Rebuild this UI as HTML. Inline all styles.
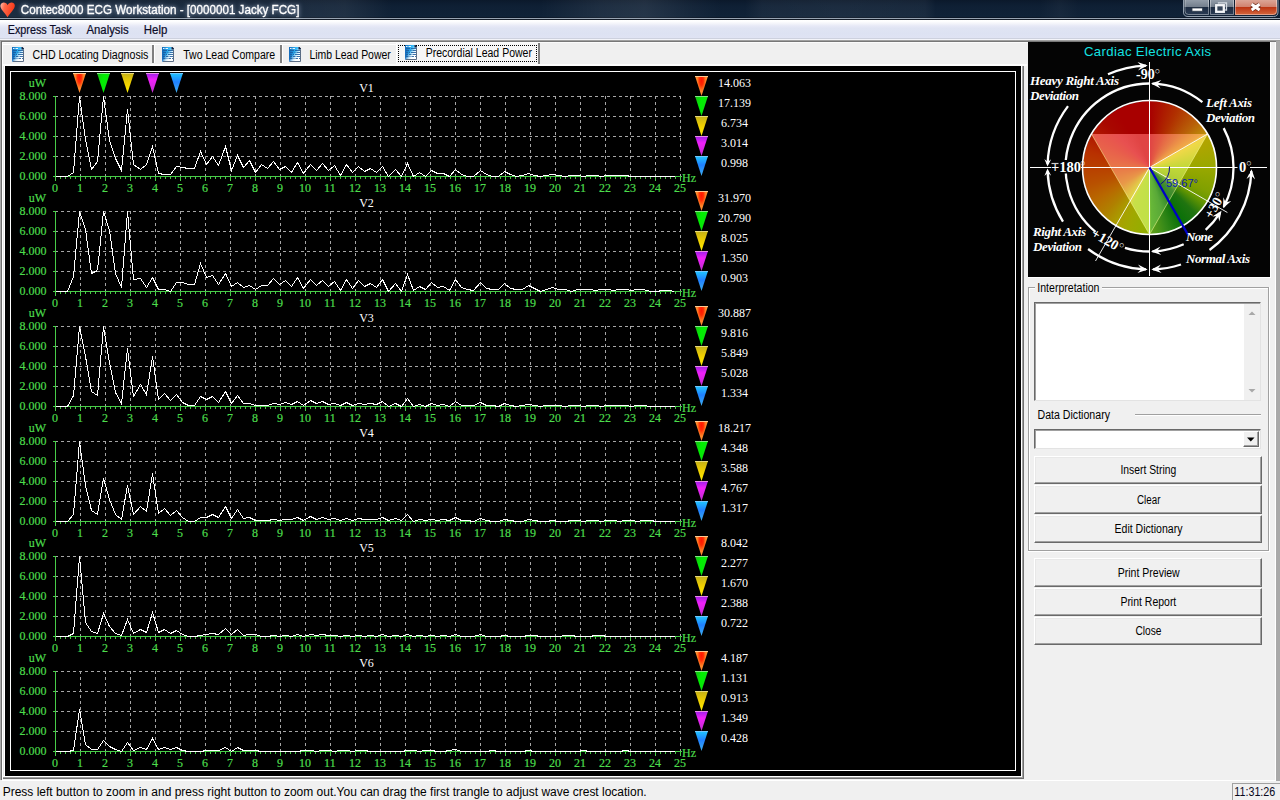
<!DOCTYPE html>
<html><head><meta charset="utf-8"><title>Contec8000 ECG Workstation</title>
<style>
*{box-sizing:border-box;margin:0;padding:0}
html,body{width:1280px;height:800px;overflow:hidden;background:#f0f0f0;font-family:"Liberation Sans",sans-serif;font-size:12px;color:#000}
.abs{position:absolute}
#title{left:0;top:0;width:1280px;height:18px;background:linear-gradient(to right,rgba(255,255,255,0.05) 0px,rgba(255,255,255,0.06) 300px,rgba(255,255,255,0.07) 345px,rgba(255,255,255,0) 392px,rgba(255,255,255,0) 540px,rgba(255,255,255,0.065) 600px,rgba(255,255,255,0.09) 645px,rgba(255,255,255,0.03) 690px,rgba(255,255,255,0) 722px,rgba(255,255,255,0) 745px,rgba(255,255,255,0.045) 762px,rgba(255,255,255,0.055) 840px,rgba(255,255,255,0.045) 925px,rgba(255,255,255,0) 936px,rgba(255,255,255,0) 1040px,rgba(255,255,255,0.03) 1060px,rgba(255,255,255,0) 1082px,rgba(255,255,255,0) 1280px),linear-gradient(#0b192b 0,#0d1d31 20%,#0f2035 38%,#102237 94%,#0c1828 95%)}
#menubar{left:0;top:20px;width:1280px;height:18px;background:linear-gradient(#ffffff 0,#fdfdfe 8%,#f3f4fa 20%,#e7e9f6 33%,#e0e4f3 45%,#dde2f2 75%,#dfe3f3 100%)}
.btn{position:absolute;left:1034px;width:228px;background:#f0f0f0;border-top:1px solid #fff;border-left:1px solid #fff;border-right:1px solid #696969;border-bottom:1px solid #696969;box-shadow:inset -1px -1px 0 #a0a0a0, inset 1px 1px 0 #e8e8e8}
.sep{position:absolute;top:45px;width:3px;height:18px;border-left:2px solid #808080;border-right:1px solid #fff}
#status{left:0;top:781px;width:1280px;height:19px;background:#f0f0f0}
#ui text{white-space:pre}
</style></head><body>
<div id="title" class="abs">
<svg class="abs" style="left:0;top:1px" width="16" height="17" viewBox="0 0 16 17"><defs><linearGradient id="hg" x1="0" y1="0" x2="1" y2="0.3"><stop offset="0" stop-color="#ffc0b0"/><stop offset="0.35" stop-color="#ff6848"/><stop offset="1" stop-color="#f83818"/></linearGradient></defs><path d="M7.6 4.2C6.4 0.8 1 0.6 0.4 4.6C0 8 4.5 11.5 7.6 16.2C10.2 11.5 15 8 14.8 4.4C14.4 0.6 9 0.8 7.6 4.2Z" fill="url(#hg)"/></svg>
<svg class="abs" style="left:1182px;top:0" width="98" height="18" viewBox="0 0 98 18">
<defs><linearGradient id="cb" x1="0" y1="0" x2="0" y2="1"><stop offset="0" stop-color="#929ca8"/><stop offset="0.48" stop-color="#717d8b"/><stop offset="0.5" stop-color="#1d2c42"/><stop offset="1" stop-color="#2a3c54"/></linearGradient>
<linearGradient id="cr" x1="0" y1="0" x2="0" y2="1"><stop offset="0" stop-color="#dba596"/><stop offset="0.48" stop-color="#d0806c"/><stop offset="0.5" stop-color="#bd3614"/><stop offset="1" stop-color="#d4683f"/></linearGradient></defs>
<path d="M1.500 -1V12Q1.500 16.500 6 16.500H91.500Q96 16.500 96 12V-1" fill="none" stroke="#a9b5c3" stroke-opacity=".85" stroke-width="1"/>
<path d="M2.500 0H27V15H6.500Q2.500 15 2.500 11Z" fill="url(#cb)"/>
<rect x="28" y="0" width="24" height="15" fill="url(#cb)"/>
<path d="M53 0H95V11Q95 15 91 15H53Z" fill="url(#cr)"/>
<path d="M3 -1V11Q3 14.500 6.500 14.500H26.500V-1M28.500 -1V14.500H51.500V-1M53.500 -1V14.500H91Q94.500 14.500 94.500 11V-1" fill="none" stroke="#fff" stroke-opacity=".38" stroke-width="1"/>
<rect x="10" y="8" width="10.500" height="3.200" fill="#fff" stroke="#303c4c" stroke-width=".8"/>
<path d="M36.500 5V3H44.500V10H43" fill="none" stroke="#d4dae2" stroke-width="1.300"/>
<rect x="34.200" y="5.200" width="7.600" height="6.600" fill="#34445a" stroke="#3a4656" stroke-width="2.800"/>
<rect x="34.200" y="5.200" width="7.600" height="6.600" fill="none" stroke="#f2f4f7" stroke-width="2.300"/>
<path d="M69.600 4.300L77.600 9.900M77.600 4.300L69.600 9.900" stroke="#5a2010" stroke-opacity=".8" stroke-width="4.600"/>
<path d="M69.600 4.300L77.600 9.900M77.600 4.300L69.600 9.900" stroke="#fff" stroke-width="3"/>
</svg>
</div>
<div class="abs" style="left:0;top:18px;width:1280px;height:1px;background:#98a4b2"></div>
<div class="abs" style="left:0;top:19px;width:1280px;height:1px;background:#141c28"></div>
<div id="menubar" class="abs"></div>
<div class="abs" style="left:0;top:38px;width:1280px;height:1px;background:#cdd1de"></div>
<div class="abs" style="left:0;top:39px;width:1280px;height:1px;background:#f3f4f9"></div>
<div class="abs" style="left:0;top:40px;width:1280px;height:1px;background:#a0a0a0"></div><div class="abs" style="left:0;top:41px;width:1280px;height:1px;background:#787878"></div>
<div class="abs" style="left:0;top:41px;width:1px;height:739px;background:#a9a9a9"></div><div class="abs" style="left:1px;top:41px;width:1px;height:739px;background:#6e6e6e"></div>
<div class="abs" style="left:2px;top:42px;width:1px;height:738px;background:#fff"></div>
<div class="abs" style="left:2px;top:42px;width:1026px;height:1px;background:#fbfbfb"></div>
<div class="abs" style="left:3px;top:44px;width:393px;height:1px;background:#fff"></div>
<div class="abs" style="left:1276px;top:41px;width:4px;height:740px;background:#a9a9a9"></div>
<div class="abs" style="left:1275px;top:42px;width:1px;height:738px;background:#fff"></div>
<div class="abs" style="left:1270px;top:42px;width:1px;height:236px;background:#fff"></div>
<div class="abs" style="left:1028px;top:277px;width:243px;height:1px;background:#fff"></div>
<div class="abs" style="left:2px;top:780px;width:1274px;height:1px;background:#fff"></div>
<div class="sep" style="left:152px"></div><div class="sep" style="left:280px"></div>
<div class="abs" style="left:396px;top:43px;width:144px;height:21px;background:#f7f7f7;border-right:2px solid #808080;border-left:1px solid #fff"></div>
<div class="abs" style="left:398px;top:45px;width:139px;height:17px;border:1px dotted #000"></div>
<div class="abs" style="left:3px;top:64px;width:1024px;height:2px;background:#fdfdfd"></div>
<div class="abs" style="left:3px;top:66px;width:1021px;height:713px;background:#707070"></div>
<div class="abs" style="left:3px;top:66px;width:1020px;height:712px;background:#a0a0a0"></div>
<div class="abs" style="left:3px;top:66px;width:1019px;height:711px;background:#fff"></div>
<div class="abs" style="left:3px;top:66px;width:1px;height:710px;background:#e6e6e6"></div>
<svg id="charts" width="1016" height="710" viewBox="5 66 1016 710" style="position:absolute;left:5px;top:66px" font-family="'Liberation Serif',serif">
<defs>
<radialGradient id="gR" cx="0.5" cy="0.22" r="0.55" gradientTransform="translate(0.5 0.22) scale(0.62 1) translate(-0.5 -0.22)"><stop offset="0" stop-color="#ff1400"/><stop offset="0.45" stop-color="#ff2c04"/><stop offset="0.8" stop-color="#ff6a1c"/><stop offset="1" stop-color="#ff8a2c"/></radialGradient>
<linearGradient id="gG" x1="0" y1="0" x2="1" y2="0.4"><stop offset="0" stop-color="#18b818"/><stop offset="0.5" stop-color="#00f000"/><stop offset="1" stop-color="#10e010"/></linearGradient>
<linearGradient id="gY" x1="0" y1="0" x2="0" y2="1"><stop offset="0" stop-color="#c4b018"/><stop offset="0.5" stop-color="#f0d000"/><stop offset="1" stop-color="#fff000"/></linearGradient>
<linearGradient id="gM" x1="0" y1="0" x2="0" y2="1"><stop offset="0" stop-color="#9a20e8"/><stop offset="0.35" stop-color="#f020f8"/><stop offset="1" stop-color="#c030d0"/></linearGradient>
<linearGradient id="gB" x1="0" y1="0" x2="0" y2="1"><stop offset="0" stop-color="#20c8ff"/><stop offset="0.45" stop-color="#2080ff"/><stop offset="1" stop-color="#40b0f0"/></linearGradient>
<g id="tR"><path d="M0 0H13L6.5 20Z" fill="url(#gR)"/><path d="M0 .5H13" stroke="#ffc890" stroke-width="1"/></g>
<g id="tG"><path d="M0 0H13L6.5 20Z" fill="url(#gG)"/><path d="M0 .5H13" stroke="#80e880" stroke-width="1"/></g>
<g id="tY"><path d="M0 0H13L6.5 20Z" fill="url(#gY)"/><path d="M0 .5H13" stroke="#e8d878" stroke-width="1"/></g>
<g id="tM"><path d="M0 0H13L6.5 20Z" fill="url(#gM)"/><path d="M0 .5H13" stroke="#e888e8" stroke-width="1"/></g>
<g id="tB"><path d="M0 0H13L6.5 20Z" fill="url(#gB)"/><path d="M0 .5H13" stroke="#70c8ff" stroke-width="1"/></g>
</defs>
<rect x="5" y="66" width="1016" height="710" fill="#000"/>
<rect x="10.5" y="71.5" width="1005" height="699" fill="none" stroke="#fff" stroke-width="1" shape-rendering="crispEdges"/>
<g stroke="#a6a6a6" stroke-width="1" stroke-dasharray="3 3" shape-rendering="crispEdges">
<path d="M55 156.5H681"/>
<path d="M55 136.5H681"/>
<path d="M55 116.5H681"/>
<path d="M55 96.5H681"/>
<path d="M80.5 96V176"/>
<path d="M105.5 96V176"/>
<path d="M130.5 96V176"/>
<path d="M155.5 96V176"/>
<path d="M180.5 96V176"/>
<path d="M205.5 96V176"/>
<path d="M230.5 96V176"/>
<path d="M255.5 96V176"/>
<path d="M280.5 96V176"/>
<path d="M305.5 96V176"/>
<path d="M330.5 96V176"/>
<path d="M355.5 96V176"/>
<path d="M380.5 96V176"/>
<path d="M405.5 96V176"/>
<path d="M430.5 96V176"/>
<path d="M455.5 96V176"/>
<path d="M480.5 96V176"/>
<path d="M505.5 96V176"/>
<path d="M530.5 96V176"/>
<path d="M555.5 96V176"/>
<path d="M580.5 96V176"/>
<path d="M605.5 96V176"/>
<path d="M630.5 96V176"/>
<path d="M655.5 96V176"/>
<path d="M680.5 96V176"/>
</g>
<g stroke="#48cc48" stroke-width="1" shape-rendering="crispEdges">
<path d="M55.5 96V181"/>
<path d="M53 176.5H682"/>
<path d="M53 156.5H56"/>
<path d="M53 136.5H56"/>
<path d="M53 116.5H56"/>
<path d="M53 96.5H56"/>
<path d="M55.5 176v5M60.5 176v3M65.5 176v3M70.5 176v3M75.5 176v3M80.5 176v5M85.5 176v3M90.5 176v3M95.5 176v3M100.5 176v3M105.5 176v5M110.5 176v3M115.5 176v3M120.5 176v3M125.5 176v3M130.5 176v5M135.5 176v3M140.5 176v3M145.5 176v3M150.5 176v3M155.5 176v5M160.5 176v3M165.5 176v3M170.5 176v3M175.5 176v3M180.5 176v5M185.5 176v3M190.5 176v3M195.5 176v3M200.5 176v3M205.5 176v5M210.5 176v3M215.5 176v3M220.5 176v3M225.5 176v3M230.5 176v5M235.5 176v3M240.5 176v3M245.5 176v3M250.5 176v3M255.5 176v5M260.5 176v3M265.5 176v3M270.5 176v3M275.5 176v3M280.5 176v5M285.5 176v3M290.5 176v3M295.5 176v3M300.5 176v3M305.5 176v5M310.5 176v3M315.5 176v3M320.5 176v3M325.5 176v3M330.5 176v5M335.5 176v3M340.5 176v3M345.5 176v3M350.5 176v3M355.5 176v5M360.5 176v3M365.5 176v3M370.5 176v3M375.5 176v3M380.5 176v5M385.5 176v3M390.5 176v3M395.5 176v3M400.5 176v3M405.5 176v5M410.5 176v3M415.5 176v3M420.5 176v3M425.5 176v3M430.5 176v5M435.5 176v3M440.5 176v3M445.5 176v3M450.5 176v3M455.5 176v5M460.5 176v3M465.5 176v3M470.5 176v3M475.5 176v3M480.5 176v5M485.5 176v3M490.5 176v3M495.5 176v3M500.5 176v3M505.5 176v5M510.5 176v3M515.5 176v3M520.5 176v3M525.5 176v3M530.5 176v5M535.5 176v3M540.5 176v3M545.5 176v3M550.5 176v3M555.5 176v5M560.5 176v3M565.5 176v3M570.5 176v3M575.5 176v3M580.5 176v5M585.5 176v3M590.5 176v3M595.5 176v3M600.5 176v3M605.5 176v5M610.5 176v3M615.5 176v3M620.5 176v3M625.5 176v3M630.5 176v5M635.5 176v3M640.5 176v3M645.5 176v3M650.5 176v3M655.5 176v5M660.5 176v3M665.5 176v3M670.5 176v3M675.5 176v3M680.5 176v5"/>
</g>
<polyline points="55.5,176.5 61.5,176.5 67.5,176.5 73.5,172.5 79.5,96.5 85.5,139.5 91.5,169.5 97.5,161.5 103.5,96.5 109.5,140.5 115.5,158.5 121.5,170.5 127.5,109.5 133.5,164.5 140.5,169.5 146.5,164.5 152.5,146.5 158.5,173.5 164.5,174.5 170.5,174.5 176.5,166.5 182.5,167.5 188.5,168.5 194.5,168.5 200.5,151.5 206.5,164.5 212.5,156.5 218.5,165.5 225.5,146.5 231.5,170.5 237.5,155.5 243.5,167.5 249.5,160.5 255.5,172.5 261.5,164.5 267.5,168.5 273.5,161.5 279.5,169.5 285.5,166.5 291.5,172.5 297.5,162.5 303.5,173.5 310.5,164.5 316.5,170.5 322.5,163.5 328.5,170.5 334.5,165.5 340.5,175.5 346.5,164.5 352.5,172.5 358.5,166.5 364.5,171.5 370.5,168.5 376.5,172.5 382.5,166.5 388.5,176.5 395.5,169.5 401.5,176.5 407.5,163.5 413.5,176.5 419.5,172.5 425.5,176.5 431.5,170.5 437.5,173.5 443.5,173.5 449.5,176.5 455.5,169.5 461.5,174.5 467.5,176.5 473.5,176.5 480.5,170.5 486.5,174.5 492.5,176.5 498.5,176.5 504.5,171.5 510.5,174.5 516.5,176.5 522.5,175.5 528.5,173.5 534.5,175.5 540.5,176.5 546.5,175.5 552.5,174.5 558.5,175.5 565.5,176.5 571.5,175.5 577.5,175.5 583.5,176.5 589.5,175.5 595.5,175.5 601.5,176.5 607.5,175.5 613.5,175.5 619.5,175.5 625.5,175.5 631.5,176.5 637.5,176.5 643.5,176.5 650.5,176.5 656.5,176.5 662.5,176.5 668.5,176.5 674.5,176.5" fill="none" stroke="#fff" stroke-width="1" shape-rendering="crispEdges"/>
<g fill="#4cdc4c" font-size="12" stroke="#4cdc4c" stroke-width="0.2">
<text x="46" y="87" text-anchor="end">uW</text>
<text x="46.5" y="180" text-anchor="end">0.000</text>
<text x="46.5" y="160" text-anchor="end">2.000</text>
<text x="46.5" y="140" text-anchor="end">4.000</text>
<text x="46.5" y="120" text-anchor="end">6.000</text>
<text x="46.5" y="100" text-anchor="end">8.000</text>
<text x="54.9" y="192" text-anchor="middle">0</text>
<text x="79.9" y="192" text-anchor="middle">1</text>
<text x="104.9" y="192" text-anchor="middle">2</text>
<text x="129.9" y="192" text-anchor="middle">3</text>
<text x="154.9" y="192" text-anchor="middle">4</text>
<text x="179.9" y="192" text-anchor="middle">5</text>
<text x="204.9" y="192" text-anchor="middle">6</text>
<text x="229.9" y="192" text-anchor="middle">7</text>
<text x="254.9" y="192" text-anchor="middle">8</text>
<text x="279.9" y="192" text-anchor="middle">9</text>
<text x="304.9" y="192" text-anchor="middle">10</text>
<text x="329.9" y="192" text-anchor="middle">11</text>
<text x="354.9" y="192" text-anchor="middle">12</text>
<text x="379.9" y="192" text-anchor="middle">13</text>
<text x="404.9" y="192" text-anchor="middle">14</text>
<text x="429.9" y="192" text-anchor="middle">15</text>
<text x="454.9" y="192" text-anchor="middle">16</text>
<text x="479.9" y="192" text-anchor="middle">17</text>
<text x="504.9" y="192" text-anchor="middle">18</text>
<text x="529.9" y="192" text-anchor="middle">19</text>
<text x="554.9" y="192" text-anchor="middle">20</text>
<text x="579.9" y="192" text-anchor="middle">21</text>
<text x="604.9" y="192" text-anchor="middle">22</text>
<text x="629.9" y="192" text-anchor="middle">23</text>
<text x="654.9" y="192" text-anchor="middle">24</text>
<text x="679.9" y="192" text-anchor="middle">25</text>
<text x="682" y="182" font-size="12">Hz</text>
</g>
<text x="366.5" y="92" fill="#fff" font-size="12" text-anchor="middle">V1</text>
<use href="#tR" x="695" y="76"/>
<text x="734.5" y="87" fill="#fff" font-size="12" text-anchor="middle">14.063</text>
<use href="#tG" x="695" y="96"/>
<text x="734.5" y="107" fill="#fff" font-size="12" text-anchor="middle">17.139</text>
<use href="#tY" x="695" y="116"/>
<text x="734.5" y="127" fill="#fff" font-size="12" text-anchor="middle">6.734</text>
<use href="#tM" x="695" y="136"/>
<text x="734.5" y="147" fill="#fff" font-size="12" text-anchor="middle">3.014</text>
<use href="#tB" x="695" y="156"/>
<text x="734.5" y="167" fill="#fff" font-size="12" text-anchor="middle">0.998</text>
<g stroke="#a6a6a6" stroke-width="1" stroke-dasharray="3 3" shape-rendering="crispEdges">
<path d="M55 271.5H681"/>
<path d="M55 251.5H681"/>
<path d="M55 231.5H681"/>
<path d="M55 211.5H681"/>
<path d="M80.5 211V291"/>
<path d="M105.5 211V291"/>
<path d="M130.5 211V291"/>
<path d="M155.5 211V291"/>
<path d="M180.5 211V291"/>
<path d="M205.5 211V291"/>
<path d="M230.5 211V291"/>
<path d="M255.5 211V291"/>
<path d="M280.5 211V291"/>
<path d="M305.5 211V291"/>
<path d="M330.5 211V291"/>
<path d="M355.5 211V291"/>
<path d="M380.5 211V291"/>
<path d="M405.5 211V291"/>
<path d="M430.5 211V291"/>
<path d="M455.5 211V291"/>
<path d="M480.5 211V291"/>
<path d="M505.5 211V291"/>
<path d="M530.5 211V291"/>
<path d="M555.5 211V291"/>
<path d="M580.5 211V291"/>
<path d="M605.5 211V291"/>
<path d="M630.5 211V291"/>
<path d="M655.5 211V291"/>
<path d="M680.5 211V291"/>
</g>
<g stroke="#48cc48" stroke-width="1" shape-rendering="crispEdges">
<path d="M55.5 211V296"/>
<path d="M53 291.5H682"/>
<path d="M53 271.5H56"/>
<path d="M53 251.5H56"/>
<path d="M53 231.5H56"/>
<path d="M53 211.5H56"/>
<path d="M55.5 291v5M60.5 291v3M65.5 291v3M70.5 291v3M75.5 291v3M80.5 291v5M85.5 291v3M90.5 291v3M95.5 291v3M100.5 291v3M105.5 291v5M110.5 291v3M115.5 291v3M120.5 291v3M125.5 291v3M130.5 291v5M135.5 291v3M140.5 291v3M145.5 291v3M150.5 291v3M155.5 291v5M160.5 291v3M165.5 291v3M170.5 291v3M175.5 291v3M180.5 291v5M185.5 291v3M190.5 291v3M195.5 291v3M200.5 291v3M205.5 291v5M210.5 291v3M215.5 291v3M220.5 291v3M225.5 291v3M230.5 291v5M235.5 291v3M240.5 291v3M245.5 291v3M250.5 291v3M255.5 291v5M260.5 291v3M265.5 291v3M270.5 291v3M275.5 291v3M280.5 291v5M285.5 291v3M290.5 291v3M295.5 291v3M300.5 291v3M305.5 291v5M310.5 291v3M315.5 291v3M320.5 291v3M325.5 291v3M330.5 291v5M335.5 291v3M340.5 291v3M345.5 291v3M350.5 291v3M355.5 291v5M360.5 291v3M365.5 291v3M370.5 291v3M375.5 291v3M380.5 291v5M385.5 291v3M390.5 291v3M395.5 291v3M400.5 291v3M405.5 291v5M410.5 291v3M415.5 291v3M420.5 291v3M425.5 291v3M430.5 291v5M435.5 291v3M440.5 291v3M445.5 291v3M450.5 291v3M455.5 291v5M460.5 291v3M465.5 291v3M470.5 291v3M475.5 291v3M480.5 291v5M485.5 291v3M490.5 291v3M495.5 291v3M500.5 291v3M505.5 291v5M510.5 291v3M515.5 291v3M520.5 291v3M525.5 291v3M530.5 291v5M535.5 291v3M540.5 291v3M545.5 291v3M550.5 291v3M555.5 291v5M560.5 291v3M565.5 291v3M570.5 291v3M575.5 291v3M580.5 291v5M585.5 291v3M590.5 291v3M595.5 291v3M600.5 291v3M605.5 291v5M610.5 291v3M615.5 291v3M620.5 291v3M625.5 291v3M630.5 291v5M635.5 291v3M640.5 291v3M645.5 291v3M650.5 291v3M655.5 291v5M660.5 291v3M665.5 291v3M670.5 291v3M675.5 291v3M680.5 291v5"/>
</g>
<polyline points="55.5,291.5 61.5,291.5 67.5,291.5 73.5,276.5 79.5,211.5 85.5,229.5 91.5,273.5 97.5,270.5 103.5,211.5 109.5,230.5 115.5,273.5 121.5,287.5 127.5,211.5 133.5,279.5 140.5,278.5 146.5,287.5 152.5,277.5 158.5,289.5 164.5,289.5 170.5,291.5 176.5,282.5 182.5,282.5 188.5,284.5 194.5,284.5 200.5,263.5 206.5,277.5 212.5,275.5 218.5,284.5 225.5,273.5 231.5,286.5 237.5,282.5 243.5,287.5 249.5,285.5 255.5,289.5 261.5,285.5 267.5,285.5 273.5,278.5 279.5,284.5 285.5,280.5 291.5,286.5 297.5,277.5 303.5,288.5 310.5,279.5 316.5,285.5 322.5,280.5 328.5,286.5 334.5,281.5 340.5,290.5 346.5,279.5 352.5,288.5 358.5,280.5 364.5,286.5 370.5,283.5 376.5,287.5 382.5,279.5 388.5,291.5 395.5,283.5 401.5,291.5 407.5,274.5 413.5,290.5 419.5,286.5 425.5,289.5 431.5,282.5 437.5,287.5 443.5,286.5 449.5,290.5 455.5,279.5 461.5,287.5 467.5,289.5 473.5,290.5 480.5,282.5 486.5,288.5 492.5,289.5 498.5,289.5 504.5,283.5 510.5,288.5 516.5,289.5 522.5,289.5 528.5,285.5 534.5,288.5 540.5,291.5 546.5,289.5 552.5,287.5 558.5,289.5 565.5,289.5 571.5,291.5 577.5,289.5 583.5,289.5 589.5,289.5 595.5,290.5 601.5,289.5 607.5,289.5 613.5,290.5 619.5,289.5 625.5,289.5 631.5,290.5 637.5,289.5 643.5,289.5 650.5,291.5 656.5,291.5 662.5,290.5 668.5,290.5 674.5,291.5" fill="none" stroke="#fff" stroke-width="1" shape-rendering="crispEdges"/>
<g fill="#4cdc4c" font-size="12" stroke="#4cdc4c" stroke-width="0.2">
<text x="46" y="202" text-anchor="end">uW</text>
<text x="46.5" y="295" text-anchor="end">0.000</text>
<text x="46.5" y="275" text-anchor="end">2.000</text>
<text x="46.5" y="255" text-anchor="end">4.000</text>
<text x="46.5" y="235" text-anchor="end">6.000</text>
<text x="46.5" y="215" text-anchor="end">8.000</text>
<text x="54.9" y="307" text-anchor="middle">0</text>
<text x="79.9" y="307" text-anchor="middle">1</text>
<text x="104.9" y="307" text-anchor="middle">2</text>
<text x="129.9" y="307" text-anchor="middle">3</text>
<text x="154.9" y="307" text-anchor="middle">4</text>
<text x="179.9" y="307" text-anchor="middle">5</text>
<text x="204.9" y="307" text-anchor="middle">6</text>
<text x="229.9" y="307" text-anchor="middle">7</text>
<text x="254.9" y="307" text-anchor="middle">8</text>
<text x="279.9" y="307" text-anchor="middle">9</text>
<text x="304.9" y="307" text-anchor="middle">10</text>
<text x="329.9" y="307" text-anchor="middle">11</text>
<text x="354.9" y="307" text-anchor="middle">12</text>
<text x="379.9" y="307" text-anchor="middle">13</text>
<text x="404.9" y="307" text-anchor="middle">14</text>
<text x="429.9" y="307" text-anchor="middle">15</text>
<text x="454.9" y="307" text-anchor="middle">16</text>
<text x="479.9" y="307" text-anchor="middle">17</text>
<text x="504.9" y="307" text-anchor="middle">18</text>
<text x="529.9" y="307" text-anchor="middle">19</text>
<text x="554.9" y="307" text-anchor="middle">20</text>
<text x="579.9" y="307" text-anchor="middle">21</text>
<text x="604.9" y="307" text-anchor="middle">22</text>
<text x="629.9" y="307" text-anchor="middle">23</text>
<text x="654.9" y="307" text-anchor="middle">24</text>
<text x="679.9" y="307" text-anchor="middle">25</text>
<text x="682" y="297" font-size="12">Hz</text>
</g>
<text x="366.5" y="207" fill="#fff" font-size="12" text-anchor="middle">V2</text>
<use href="#tR" x="695" y="191"/>
<text x="734.5" y="202" fill="#fff" font-size="12" text-anchor="middle">31.970</text>
<use href="#tG" x="695" y="211"/>
<text x="734.5" y="222" fill="#fff" font-size="12" text-anchor="middle">20.790</text>
<use href="#tY" x="695" y="231"/>
<text x="734.5" y="242" fill="#fff" font-size="12" text-anchor="middle">8.025</text>
<use href="#tM" x="695" y="251"/>
<text x="734.5" y="262" fill="#fff" font-size="12" text-anchor="middle">1.350</text>
<use href="#tB" x="695" y="271"/>
<text x="734.5" y="282" fill="#fff" font-size="12" text-anchor="middle">0.903</text>
<g stroke="#a6a6a6" stroke-width="1" stroke-dasharray="3 3" shape-rendering="crispEdges">
<path d="M55 386.5H681"/>
<path d="M55 366.5H681"/>
<path d="M55 346.5H681"/>
<path d="M55 326.5H681"/>
<path d="M80.5 326V406"/>
<path d="M105.5 326V406"/>
<path d="M130.5 326V406"/>
<path d="M155.5 326V406"/>
<path d="M180.5 326V406"/>
<path d="M205.5 326V406"/>
<path d="M230.5 326V406"/>
<path d="M255.5 326V406"/>
<path d="M280.5 326V406"/>
<path d="M305.5 326V406"/>
<path d="M330.5 326V406"/>
<path d="M355.5 326V406"/>
<path d="M380.5 326V406"/>
<path d="M405.5 326V406"/>
<path d="M430.5 326V406"/>
<path d="M455.5 326V406"/>
<path d="M480.5 326V406"/>
<path d="M505.5 326V406"/>
<path d="M530.5 326V406"/>
<path d="M555.5 326V406"/>
<path d="M580.5 326V406"/>
<path d="M605.5 326V406"/>
<path d="M630.5 326V406"/>
<path d="M655.5 326V406"/>
<path d="M680.5 326V406"/>
</g>
<g stroke="#48cc48" stroke-width="1" shape-rendering="crispEdges">
<path d="M55.5 326V411"/>
<path d="M53 406.5H682"/>
<path d="M53 386.5H56"/>
<path d="M53 366.5H56"/>
<path d="M53 346.5H56"/>
<path d="M53 326.5H56"/>
<path d="M55.5 406v5M60.5 406v3M65.5 406v3M70.5 406v3M75.5 406v3M80.5 406v5M85.5 406v3M90.5 406v3M95.5 406v3M100.5 406v3M105.5 406v5M110.5 406v3M115.5 406v3M120.5 406v3M125.5 406v3M130.5 406v5M135.5 406v3M140.5 406v3M145.5 406v3M150.5 406v3M155.5 406v5M160.5 406v3M165.5 406v3M170.5 406v3M175.5 406v3M180.5 406v5M185.5 406v3M190.5 406v3M195.5 406v3M200.5 406v3M205.5 406v5M210.5 406v3M215.5 406v3M220.5 406v3M225.5 406v3M230.5 406v5M235.5 406v3M240.5 406v3M245.5 406v3M250.5 406v3M255.5 406v5M260.5 406v3M265.5 406v3M270.5 406v3M275.5 406v3M280.5 406v5M285.5 406v3M290.5 406v3M295.5 406v3M300.5 406v3M305.5 406v5M310.5 406v3M315.5 406v3M320.5 406v3M325.5 406v3M330.5 406v5M335.5 406v3M340.5 406v3M345.5 406v3M350.5 406v3M355.5 406v5M360.5 406v3M365.5 406v3M370.5 406v3M375.5 406v3M380.5 406v5M385.5 406v3M390.5 406v3M395.5 406v3M400.5 406v3M405.5 406v5M410.5 406v3M415.5 406v3M420.5 406v3M425.5 406v3M430.5 406v5M435.5 406v3M440.5 406v3M445.5 406v3M450.5 406v3M455.5 406v5M460.5 406v3M465.5 406v3M470.5 406v3M475.5 406v3M480.5 406v5M485.5 406v3M490.5 406v3M495.5 406v3M500.5 406v3M505.5 406v5M510.5 406v3M515.5 406v3M520.5 406v3M525.5 406v3M530.5 406v5M535.5 406v3M540.5 406v3M545.5 406v3M550.5 406v3M555.5 406v5M560.5 406v3M565.5 406v3M570.5 406v3M575.5 406v3M580.5 406v5M585.5 406v3M590.5 406v3M595.5 406v3M600.5 406v3M605.5 406v5M610.5 406v3M615.5 406v3M620.5 406v3M625.5 406v3M630.5 406v5M635.5 406v3M640.5 406v3M645.5 406v3M650.5 406v3M655.5 406v5M660.5 406v3M665.5 406v3M670.5 406v3M675.5 406v3M680.5 406v5"/>
</g>
<polyline points="55.5,406.5 61.5,406.5 67.5,406.5 73.5,395.5 79.5,326.5 85.5,356.5 91.5,391.5 97.5,395.5 103.5,326.5 109.5,362.5 115.5,392.5 121.5,403.5 127.5,348.5 133.5,396.5 140.5,384.5 146.5,394.5 152.5,356.5 158.5,399.5 164.5,393.5 170.5,400.5 176.5,394.5 182.5,402.5 188.5,405.5 194.5,405.5 200.5,396.5 206.5,399.5 212.5,396.5 218.5,402.5 225.5,391.5 231.5,403.5 237.5,395.5 243.5,403.5 249.5,403.5 255.5,405.5 261.5,405.5 267.5,405.5 273.5,403.5 279.5,404.5 285.5,402.5 291.5,404.5 297.5,401.5 303.5,405.5 310.5,400.5 316.5,403.5 322.5,401.5 328.5,404.5 334.5,403.5 340.5,405.5 346.5,402.5 352.5,405.5 358.5,403.5 364.5,404.5 370.5,403.5 376.5,404.5 382.5,401.5 388.5,406.5 395.5,403.5 401.5,406.5 407.5,398.5 413.5,406.5 419.5,404.5 425.5,406.5 431.5,403.5 437.5,405.5 443.5,404.5 449.5,406.5 455.5,401.5 461.5,405.5 467.5,405.5 473.5,405.5 480.5,402.5 486.5,405.5 492.5,405.5 498.5,406.5 504.5,403.5 510.5,405.5 516.5,406.5 522.5,405.5 528.5,404.5 534.5,405.5 540.5,406.5 546.5,405.5 552.5,405.5 558.5,405.5 565.5,406.5 571.5,405.5 577.5,405.5 583.5,406.5 589.5,405.5 595.5,405.5 601.5,406.5 607.5,405.5 613.5,405.5 619.5,405.5 625.5,405.5 631.5,406.5 637.5,405.5 643.5,405.5 650.5,406.5 656.5,406.5 662.5,406.5 668.5,406.5 674.5,406.5" fill="none" stroke="#fff" stroke-width="1" shape-rendering="crispEdges"/>
<g fill="#4cdc4c" font-size="12" stroke="#4cdc4c" stroke-width="0.2">
<text x="46" y="317" text-anchor="end">uW</text>
<text x="46.5" y="410" text-anchor="end">0.000</text>
<text x="46.5" y="390" text-anchor="end">2.000</text>
<text x="46.5" y="370" text-anchor="end">4.000</text>
<text x="46.5" y="350" text-anchor="end">6.000</text>
<text x="46.5" y="330" text-anchor="end">8.000</text>
<text x="54.9" y="422" text-anchor="middle">0</text>
<text x="79.9" y="422" text-anchor="middle">1</text>
<text x="104.9" y="422" text-anchor="middle">2</text>
<text x="129.9" y="422" text-anchor="middle">3</text>
<text x="154.9" y="422" text-anchor="middle">4</text>
<text x="179.9" y="422" text-anchor="middle">5</text>
<text x="204.9" y="422" text-anchor="middle">6</text>
<text x="229.9" y="422" text-anchor="middle">7</text>
<text x="254.9" y="422" text-anchor="middle">8</text>
<text x="279.9" y="422" text-anchor="middle">9</text>
<text x="304.9" y="422" text-anchor="middle">10</text>
<text x="329.9" y="422" text-anchor="middle">11</text>
<text x="354.9" y="422" text-anchor="middle">12</text>
<text x="379.9" y="422" text-anchor="middle">13</text>
<text x="404.9" y="422" text-anchor="middle">14</text>
<text x="429.9" y="422" text-anchor="middle">15</text>
<text x="454.9" y="422" text-anchor="middle">16</text>
<text x="479.9" y="422" text-anchor="middle">17</text>
<text x="504.9" y="422" text-anchor="middle">18</text>
<text x="529.9" y="422" text-anchor="middle">19</text>
<text x="554.9" y="422" text-anchor="middle">20</text>
<text x="579.9" y="422" text-anchor="middle">21</text>
<text x="604.9" y="422" text-anchor="middle">22</text>
<text x="629.9" y="422" text-anchor="middle">23</text>
<text x="654.9" y="422" text-anchor="middle">24</text>
<text x="679.9" y="422" text-anchor="middle">25</text>
<text x="682" y="412" font-size="12">Hz</text>
</g>
<text x="366.5" y="322" fill="#fff" font-size="12" text-anchor="middle">V3</text>
<use href="#tR" x="695" y="306"/>
<text x="734.5" y="317" fill="#fff" font-size="12" text-anchor="middle">30.887</text>
<use href="#tG" x="695" y="326"/>
<text x="734.5" y="337" fill="#fff" font-size="12" text-anchor="middle">9.816</text>
<use href="#tY" x="695" y="346"/>
<text x="734.5" y="357" fill="#fff" font-size="12" text-anchor="middle">5.849</text>
<use href="#tM" x="695" y="366"/>
<text x="734.5" y="377" fill="#fff" font-size="12" text-anchor="middle">5.028</text>
<use href="#tB" x="695" y="386"/>
<text x="734.5" y="397" fill="#fff" font-size="12" text-anchor="middle">1.334</text>
<g stroke="#a6a6a6" stroke-width="1" stroke-dasharray="3 3" shape-rendering="crispEdges">
<path d="M55 501.5H681"/>
<path d="M55 481.5H681"/>
<path d="M55 461.5H681"/>
<path d="M55 441.5H681"/>
<path d="M80.5 441V521"/>
<path d="M105.5 441V521"/>
<path d="M130.5 441V521"/>
<path d="M155.5 441V521"/>
<path d="M180.5 441V521"/>
<path d="M205.5 441V521"/>
<path d="M230.5 441V521"/>
<path d="M255.5 441V521"/>
<path d="M280.5 441V521"/>
<path d="M305.5 441V521"/>
<path d="M330.5 441V521"/>
<path d="M355.5 441V521"/>
<path d="M380.5 441V521"/>
<path d="M405.5 441V521"/>
<path d="M430.5 441V521"/>
<path d="M455.5 441V521"/>
<path d="M480.5 441V521"/>
<path d="M505.5 441V521"/>
<path d="M530.5 441V521"/>
<path d="M555.5 441V521"/>
<path d="M580.5 441V521"/>
<path d="M605.5 441V521"/>
<path d="M630.5 441V521"/>
<path d="M655.5 441V521"/>
<path d="M680.5 441V521"/>
</g>
<g stroke="#48cc48" stroke-width="1" shape-rendering="crispEdges">
<path d="M55.5 441V526"/>
<path d="M53 521.5H682"/>
<path d="M53 501.5H56"/>
<path d="M53 481.5H56"/>
<path d="M53 461.5H56"/>
<path d="M53 441.5H56"/>
<path d="M55.5 521v5M60.5 521v3M65.5 521v3M70.5 521v3M75.5 521v3M80.5 521v5M85.5 521v3M90.5 521v3M95.5 521v3M100.5 521v3M105.5 521v5M110.5 521v3M115.5 521v3M120.5 521v3M125.5 521v3M130.5 521v5M135.5 521v3M140.5 521v3M145.5 521v3M150.5 521v3M155.5 521v5M160.5 521v3M165.5 521v3M170.5 521v3M175.5 521v3M180.5 521v5M185.5 521v3M190.5 521v3M195.5 521v3M200.5 521v3M205.5 521v5M210.5 521v3M215.5 521v3M220.5 521v3M225.5 521v3M230.5 521v5M235.5 521v3M240.5 521v3M245.5 521v3M250.5 521v3M255.5 521v5M260.5 521v3M265.5 521v3M270.5 521v3M275.5 521v3M280.5 521v5M285.5 521v3M290.5 521v3M295.5 521v3M300.5 521v3M305.5 521v5M310.5 521v3M315.5 521v3M320.5 521v3M325.5 521v3M330.5 521v5M335.5 521v3M340.5 521v3M345.5 521v3M350.5 521v3M355.5 521v5M360.5 521v3M365.5 521v3M370.5 521v3M375.5 521v3M380.5 521v5M385.5 521v3M390.5 521v3M395.5 521v3M400.5 521v3M405.5 521v5M410.5 521v3M415.5 521v3M420.5 521v3M425.5 521v3M430.5 521v5M435.5 521v3M440.5 521v3M445.5 521v3M450.5 521v3M455.5 521v5M460.5 521v3M465.5 521v3M470.5 521v3M475.5 521v3M480.5 521v5M485.5 521v3M490.5 521v3M495.5 521v3M500.5 521v3M505.5 521v5M510.5 521v3M515.5 521v3M520.5 521v3M525.5 521v3M530.5 521v5M535.5 521v3M540.5 521v3M545.5 521v3M550.5 521v3M555.5 521v5M560.5 521v3M565.5 521v3M570.5 521v3M575.5 521v3M580.5 521v5M585.5 521v3M590.5 521v3M595.5 521v3M600.5 521v3M605.5 521v5M610.5 521v3M615.5 521v3M620.5 521v3M625.5 521v3M630.5 521v5M635.5 521v3M640.5 521v3M645.5 521v3M650.5 521v3M655.5 521v5M660.5 521v3M665.5 521v3M670.5 521v3M675.5 521v3M680.5 521v5"/>
</g>
<polyline points="55.5,521.5 61.5,521.5 67.5,521.5 73.5,514.5 79.5,441.5 85.5,485.5 91.5,510.5 97.5,514.5 103.5,478.5 109.5,499.5 115.5,514.5 121.5,519.5 127.5,485.5 133.5,514.5 140.5,506.5 146.5,511.5 152.5,473.5 158.5,513.5 164.5,508.5 170.5,515.5 176.5,510.5 182.5,517.5 188.5,521.5 194.5,521.5 200.5,517.5 206.5,517.5 212.5,514.5 218.5,517.5 225.5,506.5 231.5,518.5 237.5,509.5 243.5,518.5 249.5,517.5 255.5,520.5 261.5,520.5 267.5,520.5 273.5,519.5 279.5,520.5 285.5,519.5 291.5,519.5 297.5,517.5 303.5,520.5 310.5,516.5 316.5,519.5 322.5,517.5 328.5,519.5 334.5,518.5 340.5,520.5 346.5,518.5 352.5,520.5 358.5,518.5 364.5,519.5 370.5,519.5 376.5,519.5 382.5,517.5 388.5,520.5 395.5,518.5 401.5,520.5 407.5,514.5 413.5,521.5 419.5,519.5 425.5,520.5 431.5,519.5 437.5,520.5 443.5,519.5 449.5,520.5 455.5,517.5 461.5,520.5 467.5,520.5 473.5,521.5 480.5,518.5 486.5,520.5 492.5,521.5 498.5,521.5 504.5,519.5 510.5,520.5 516.5,521.5 522.5,521.5 528.5,519.5 534.5,520.5 540.5,521.5 546.5,521.5 552.5,520.5 558.5,521.5 565.5,521.5 571.5,520.5 577.5,520.5 583.5,521.5 589.5,520.5 595.5,520.5 601.5,521.5 607.5,520.5 613.5,520.5 619.5,521.5 625.5,520.5 631.5,520.5 637.5,521.5 643.5,520.5 650.5,520.5 656.5,521.5 662.5,521.5 668.5,521.5 674.5,521.5" fill="none" stroke="#fff" stroke-width="1" shape-rendering="crispEdges"/>
<g fill="#4cdc4c" font-size="12" stroke="#4cdc4c" stroke-width="0.2">
<text x="46" y="432" text-anchor="end">uW</text>
<text x="46.5" y="525" text-anchor="end">0.000</text>
<text x="46.5" y="505" text-anchor="end">2.000</text>
<text x="46.5" y="485" text-anchor="end">4.000</text>
<text x="46.5" y="465" text-anchor="end">6.000</text>
<text x="46.5" y="445" text-anchor="end">8.000</text>
<text x="54.9" y="537" text-anchor="middle">0</text>
<text x="79.9" y="537" text-anchor="middle">1</text>
<text x="104.9" y="537" text-anchor="middle">2</text>
<text x="129.9" y="537" text-anchor="middle">3</text>
<text x="154.9" y="537" text-anchor="middle">4</text>
<text x="179.9" y="537" text-anchor="middle">5</text>
<text x="204.9" y="537" text-anchor="middle">6</text>
<text x="229.9" y="537" text-anchor="middle">7</text>
<text x="254.9" y="537" text-anchor="middle">8</text>
<text x="279.9" y="537" text-anchor="middle">9</text>
<text x="304.9" y="537" text-anchor="middle">10</text>
<text x="329.9" y="537" text-anchor="middle">11</text>
<text x="354.9" y="537" text-anchor="middle">12</text>
<text x="379.9" y="537" text-anchor="middle">13</text>
<text x="404.9" y="537" text-anchor="middle">14</text>
<text x="429.9" y="537" text-anchor="middle">15</text>
<text x="454.9" y="537" text-anchor="middle">16</text>
<text x="479.9" y="537" text-anchor="middle">17</text>
<text x="504.9" y="537" text-anchor="middle">18</text>
<text x="529.9" y="537" text-anchor="middle">19</text>
<text x="554.9" y="537" text-anchor="middle">20</text>
<text x="579.9" y="537" text-anchor="middle">21</text>
<text x="604.9" y="537" text-anchor="middle">22</text>
<text x="629.9" y="537" text-anchor="middle">23</text>
<text x="654.9" y="537" text-anchor="middle">24</text>
<text x="679.9" y="537" text-anchor="middle">25</text>
<text x="682" y="527" font-size="12">Hz</text>
</g>
<text x="366.5" y="437" fill="#fff" font-size="12" text-anchor="middle">V4</text>
<use href="#tR" x="695" y="421"/>
<text x="734.5" y="432" fill="#fff" font-size="12" text-anchor="middle">18.217</text>
<use href="#tG" x="695" y="441"/>
<text x="734.5" y="452" fill="#fff" font-size="12" text-anchor="middle">4.348</text>
<use href="#tY" x="695" y="461"/>
<text x="734.5" y="472" fill="#fff" font-size="12" text-anchor="middle">3.588</text>
<use href="#tM" x="695" y="481"/>
<text x="734.5" y="492" fill="#fff" font-size="12" text-anchor="middle">4.767</text>
<use href="#tB" x="695" y="501"/>
<text x="734.5" y="512" fill="#fff" font-size="12" text-anchor="middle">1.317</text>
<g stroke="#a6a6a6" stroke-width="1" stroke-dasharray="3 3" shape-rendering="crispEdges">
<path d="M55 616.5H681"/>
<path d="M55 596.5H681"/>
<path d="M55 576.5H681"/>
<path d="M55 556.5H681"/>
<path d="M80.5 556V636"/>
<path d="M105.5 556V636"/>
<path d="M130.5 556V636"/>
<path d="M155.5 556V636"/>
<path d="M180.5 556V636"/>
<path d="M205.5 556V636"/>
<path d="M230.5 556V636"/>
<path d="M255.5 556V636"/>
<path d="M280.5 556V636"/>
<path d="M305.5 556V636"/>
<path d="M330.5 556V636"/>
<path d="M355.5 556V636"/>
<path d="M380.5 556V636"/>
<path d="M405.5 556V636"/>
<path d="M430.5 556V636"/>
<path d="M455.5 556V636"/>
<path d="M480.5 556V636"/>
<path d="M505.5 556V636"/>
<path d="M530.5 556V636"/>
<path d="M555.5 556V636"/>
<path d="M580.5 556V636"/>
<path d="M605.5 556V636"/>
<path d="M630.5 556V636"/>
<path d="M655.5 556V636"/>
<path d="M680.5 556V636"/>
</g>
<g stroke="#48cc48" stroke-width="1" shape-rendering="crispEdges">
<path d="M55.5 556V641"/>
<path d="M53 636.5H682"/>
<path d="M53 616.5H56"/>
<path d="M53 596.5H56"/>
<path d="M53 576.5H56"/>
<path d="M53 556.5H56"/>
<path d="M55.5 636v5M60.5 636v3M65.5 636v3M70.5 636v3M75.5 636v3M80.5 636v5M85.5 636v3M90.5 636v3M95.5 636v3M100.5 636v3M105.5 636v5M110.5 636v3M115.5 636v3M120.5 636v3M125.5 636v3M130.5 636v5M135.5 636v3M140.5 636v3M145.5 636v3M150.5 636v3M155.5 636v5M160.5 636v3M165.5 636v3M170.5 636v3M175.5 636v3M180.5 636v5M185.5 636v3M190.5 636v3M195.5 636v3M200.5 636v3M205.5 636v5M210.5 636v3M215.5 636v3M220.5 636v3M225.5 636v3M230.5 636v5M235.5 636v3M240.5 636v3M245.5 636v3M250.5 636v3M255.5 636v5M260.5 636v3M265.5 636v3M270.5 636v3M275.5 636v3M280.5 636v5M285.5 636v3M290.5 636v3M295.5 636v3M300.5 636v3M305.5 636v5M310.5 636v3M315.5 636v3M320.5 636v3M325.5 636v3M330.5 636v5M335.5 636v3M340.5 636v3M345.5 636v3M350.5 636v3M355.5 636v5M360.5 636v3M365.5 636v3M370.5 636v3M375.5 636v3M380.5 636v5M385.5 636v3M390.5 636v3M395.5 636v3M400.5 636v3M405.5 636v5M410.5 636v3M415.5 636v3M420.5 636v3M425.5 636v3M430.5 636v5M435.5 636v3M440.5 636v3M445.5 636v3M450.5 636v3M455.5 636v5M460.5 636v3M465.5 636v3M470.5 636v3M475.5 636v3M480.5 636v5M485.5 636v3M490.5 636v3M495.5 636v3M500.5 636v3M505.5 636v5M510.5 636v3M515.5 636v3M520.5 636v3M525.5 636v3M530.5 636v5M535.5 636v3M540.5 636v3M545.5 636v3M550.5 636v3M555.5 636v5M560.5 636v3M565.5 636v3M570.5 636v3M575.5 636v3M580.5 636v5M585.5 636v3M590.5 636v3M595.5 636v3M600.5 636v3M605.5 636v5M610.5 636v3M615.5 636v3M620.5 636v3M625.5 636v3M630.5 636v5M635.5 636v3M640.5 636v3M645.5 636v3M650.5 636v3M655.5 636v5M660.5 636v3M665.5 636v3M670.5 636v3M675.5 636v3M680.5 636v5"/>
</g>
<polyline points="55.5,636.5 61.5,636.5 67.5,636.5 73.5,633.5 79.5,556.5 85.5,622.5 91.5,631.5 97.5,633.5 103.5,613.5 109.5,626.5 115.5,633.5 121.5,635.5 127.5,619.5 133.5,633.5 140.5,629.5 146.5,632.5 152.5,612.5 158.5,632.5 164.5,629.5 170.5,633.5 176.5,630.5 182.5,634.5 188.5,636.5 194.5,636.5 200.5,635.5 206.5,634.5 212.5,633.5 218.5,634.5 225.5,628.5 231.5,634.5 237.5,629.5 243.5,635.5 249.5,634.5 255.5,634.5 261.5,636.5 267.5,636.5 273.5,635.5 279.5,636.5 285.5,635.5 291.5,636.5 297.5,634.5 303.5,636.5 310.5,634.5 316.5,635.5 322.5,634.5 328.5,635.5 334.5,635.5 340.5,636.5 346.5,635.5 352.5,636.5 358.5,635.5 364.5,636.5 370.5,635.5 376.5,636.5 382.5,634.5 388.5,636.5 395.5,635.5 401.5,636.5 407.5,634.5 413.5,636.5 419.5,635.5 425.5,636.5 431.5,635.5 437.5,636.5 443.5,635.5 449.5,636.5 455.5,634.5 461.5,636.5 467.5,636.5 473.5,636.5 480.5,634.5 486.5,636.5 492.5,636.5 498.5,636.5 504.5,635.5 510.5,636.5 516.5,636.5 522.5,636.5 528.5,635.5 534.5,635.5 540.5,636.5 546.5,636.5 552.5,636.5 558.5,636.5 565.5,635.5 571.5,635.5 577.5,636.5 583.5,636.5 589.5,636.5 595.5,635.5 601.5,635.5 607.5,636.5 613.5,636.5 619.5,636.5 625.5,636.5 631.5,636.5 637.5,636.5 643.5,636.5 650.5,636.5 656.5,636.5 662.5,636.5 668.5,636.5 674.5,636.5" fill="none" stroke="#fff" stroke-width="1" shape-rendering="crispEdges"/>
<g fill="#4cdc4c" font-size="12" stroke="#4cdc4c" stroke-width="0.2">
<text x="46" y="547" text-anchor="end">uW</text>
<text x="46.5" y="640" text-anchor="end">0.000</text>
<text x="46.5" y="620" text-anchor="end">2.000</text>
<text x="46.5" y="600" text-anchor="end">4.000</text>
<text x="46.5" y="580" text-anchor="end">6.000</text>
<text x="46.5" y="560" text-anchor="end">8.000</text>
<text x="54.9" y="652" text-anchor="middle">0</text>
<text x="79.9" y="652" text-anchor="middle">1</text>
<text x="104.9" y="652" text-anchor="middle">2</text>
<text x="129.9" y="652" text-anchor="middle">3</text>
<text x="154.9" y="652" text-anchor="middle">4</text>
<text x="179.9" y="652" text-anchor="middle">5</text>
<text x="204.9" y="652" text-anchor="middle">6</text>
<text x="229.9" y="652" text-anchor="middle">7</text>
<text x="254.9" y="652" text-anchor="middle">8</text>
<text x="279.9" y="652" text-anchor="middle">9</text>
<text x="304.9" y="652" text-anchor="middle">10</text>
<text x="329.9" y="652" text-anchor="middle">11</text>
<text x="354.9" y="652" text-anchor="middle">12</text>
<text x="379.9" y="652" text-anchor="middle">13</text>
<text x="404.9" y="652" text-anchor="middle">14</text>
<text x="429.9" y="652" text-anchor="middle">15</text>
<text x="454.9" y="652" text-anchor="middle">16</text>
<text x="479.9" y="652" text-anchor="middle">17</text>
<text x="504.9" y="652" text-anchor="middle">18</text>
<text x="529.9" y="652" text-anchor="middle">19</text>
<text x="554.9" y="652" text-anchor="middle">20</text>
<text x="579.9" y="652" text-anchor="middle">21</text>
<text x="604.9" y="652" text-anchor="middle">22</text>
<text x="629.9" y="652" text-anchor="middle">23</text>
<text x="654.9" y="652" text-anchor="middle">24</text>
<text x="679.9" y="652" text-anchor="middle">25</text>
<text x="682" y="642" font-size="12">Hz</text>
</g>
<text x="366.5" y="552" fill="#fff" font-size="12" text-anchor="middle">V5</text>
<use href="#tR" x="695" y="536"/>
<text x="734.5" y="547" fill="#fff" font-size="12" text-anchor="middle">8.042</text>
<use href="#tG" x="695" y="556"/>
<text x="734.5" y="567" fill="#fff" font-size="12" text-anchor="middle">2.277</text>
<use href="#tY" x="695" y="576"/>
<text x="734.5" y="587" fill="#fff" font-size="12" text-anchor="middle">1.670</text>
<use href="#tM" x="695" y="596"/>
<text x="734.5" y="607" fill="#fff" font-size="12" text-anchor="middle">2.388</text>
<use href="#tB" x="695" y="616"/>
<text x="734.5" y="627" fill="#fff" font-size="12" text-anchor="middle">0.722</text>
<g stroke="#a6a6a6" stroke-width="1" stroke-dasharray="3 3" shape-rendering="crispEdges">
<path d="M55 731.5H681"/>
<path d="M55 711.5H681"/>
<path d="M55 691.5H681"/>
<path d="M55 671.5H681"/>
<path d="M80.5 671V751"/>
<path d="M105.5 671V751"/>
<path d="M130.5 671V751"/>
<path d="M155.5 671V751"/>
<path d="M180.5 671V751"/>
<path d="M205.5 671V751"/>
<path d="M230.5 671V751"/>
<path d="M255.5 671V751"/>
<path d="M280.5 671V751"/>
<path d="M305.5 671V751"/>
<path d="M330.5 671V751"/>
<path d="M355.5 671V751"/>
<path d="M380.5 671V751"/>
<path d="M405.5 671V751"/>
<path d="M430.5 671V751"/>
<path d="M455.5 671V751"/>
<path d="M480.5 671V751"/>
<path d="M505.5 671V751"/>
<path d="M530.5 671V751"/>
<path d="M555.5 671V751"/>
<path d="M580.5 671V751"/>
<path d="M605.5 671V751"/>
<path d="M630.5 671V751"/>
<path d="M655.5 671V751"/>
<path d="M680.5 671V751"/>
</g>
<g stroke="#48cc48" stroke-width="1" shape-rendering="crispEdges">
<path d="M55.5 671V756"/>
<path d="M53 751.5H682"/>
<path d="M53 731.5H56"/>
<path d="M53 711.5H56"/>
<path d="M53 691.5H56"/>
<path d="M53 671.5H56"/>
<path d="M55.5 751v5M60.5 751v3M65.5 751v3M70.5 751v3M75.5 751v3M80.5 751v5M85.5 751v3M90.5 751v3M95.5 751v3M100.5 751v3M105.5 751v5M110.5 751v3M115.5 751v3M120.5 751v3M125.5 751v3M130.5 751v5M135.5 751v3M140.5 751v3M145.5 751v3M150.5 751v3M155.5 751v5M160.5 751v3M165.5 751v3M170.5 751v3M175.5 751v3M180.5 751v5M185.5 751v3M190.5 751v3M195.5 751v3M200.5 751v3M205.5 751v5M210.5 751v3M215.5 751v3M220.5 751v3M225.5 751v3M230.5 751v5M235.5 751v3M240.5 751v3M245.5 751v3M250.5 751v3M255.5 751v5M260.5 751v3M265.5 751v3M270.5 751v3M275.5 751v3M280.5 751v5M285.5 751v3M290.5 751v3M295.5 751v3M300.5 751v3M305.5 751v5M310.5 751v3M315.5 751v3M320.5 751v3M325.5 751v3M330.5 751v5M335.5 751v3M340.5 751v3M345.5 751v3M350.5 751v3M355.5 751v5M360.5 751v3M365.5 751v3M370.5 751v3M375.5 751v3M380.5 751v5M385.5 751v3M390.5 751v3M395.5 751v3M400.5 751v3M405.5 751v5M410.5 751v3M415.5 751v3M420.5 751v3M425.5 751v3M430.5 751v5M435.5 751v3M440.5 751v3M445.5 751v3M450.5 751v3M455.5 751v5M460.5 751v3M465.5 751v3M470.5 751v3M475.5 751v3M480.5 751v5M485.5 751v3M490.5 751v3M495.5 751v3M500.5 751v3M505.5 751v5M510.5 751v3M515.5 751v3M520.5 751v3M525.5 751v3M530.5 751v5M535.5 751v3M540.5 751v3M545.5 751v3M550.5 751v3M555.5 751v5M560.5 751v3M565.5 751v3M570.5 751v3M575.5 751v3M580.5 751v5M585.5 751v3M590.5 751v3M595.5 751v3M600.5 751v3M605.5 751v5M610.5 751v3M615.5 751v3M620.5 751v3M625.5 751v3M630.5 751v5M635.5 751v3M640.5 751v3M645.5 751v3M650.5 751v3M655.5 751v5M660.5 751v3M665.5 751v3M670.5 751v3M675.5 751v3M680.5 751v5"/>
</g>
<polyline points="55.5,751.5 61.5,751.5 67.5,751.5 73.5,750.5 79.5,709.5 85.5,744.5 91.5,749.5 97.5,749.5 103.5,740.5 109.5,746.5 115.5,749.5 121.5,751.5 127.5,742.5 133.5,750.5 140.5,747.5 146.5,749.5 152.5,738.5 158.5,749.5 164.5,747.5 170.5,749.5 176.5,747.5 182.5,750.5 188.5,751.5 194.5,751.5 200.5,751.5 206.5,750.5 212.5,750.5 218.5,750.5 225.5,747.5 231.5,751.5 237.5,747.5 243.5,750.5 249.5,750.5 255.5,750.5 261.5,751.5 267.5,751.5 273.5,751.5 279.5,751.5 285.5,751.5 291.5,751.5 297.5,751.5 303.5,750.5 310.5,750.5 316.5,751.5 322.5,750.5 328.5,750.5 334.5,751.5 340.5,750.5 346.5,750.5 352.5,751.5 358.5,750.5 364.5,750.5 370.5,751.5 376.5,751.5 382.5,751.5 388.5,751.5 395.5,751.5 401.5,751.5 407.5,750.5 413.5,750.5 419.5,751.5 425.5,750.5 431.5,750.5 437.5,751.5 443.5,751.5 449.5,750.5 455.5,749.5 461.5,751.5 467.5,751.5 473.5,751.5 480.5,751.5 486.5,751.5 492.5,750.5 498.5,751.5 504.5,751.5 510.5,751.5 516.5,751.5 522.5,751.5 528.5,750.5 534.5,751.5 540.5,751.5 546.5,751.5 552.5,751.5 558.5,751.5 565.5,751.5 571.5,751.5 577.5,751.5 583.5,750.5 589.5,751.5 595.5,751.5 601.5,751.5 607.5,751.5 613.5,751.5 619.5,751.5 625.5,750.5 631.5,751.5 637.5,751.5 643.5,751.5 650.5,751.5 656.5,751.5 662.5,751.5 668.5,751.5 674.5,751.5" fill="none" stroke="#fff" stroke-width="1" shape-rendering="crispEdges"/>
<g fill="#4cdc4c" font-size="12" stroke="#4cdc4c" stroke-width="0.2">
<text x="46" y="662" text-anchor="end">uW</text>
<text x="46.5" y="755" text-anchor="end">0.000</text>
<text x="46.5" y="735" text-anchor="end">2.000</text>
<text x="46.5" y="715" text-anchor="end">4.000</text>
<text x="46.5" y="695" text-anchor="end">6.000</text>
<text x="46.5" y="675" text-anchor="end">8.000</text>
<text x="54.9" y="767" text-anchor="middle">0</text>
<text x="79.9" y="767" text-anchor="middle">1</text>
<text x="104.9" y="767" text-anchor="middle">2</text>
<text x="129.9" y="767" text-anchor="middle">3</text>
<text x="154.9" y="767" text-anchor="middle">4</text>
<text x="179.9" y="767" text-anchor="middle">5</text>
<text x="204.9" y="767" text-anchor="middle">6</text>
<text x="229.9" y="767" text-anchor="middle">7</text>
<text x="254.9" y="767" text-anchor="middle">8</text>
<text x="279.9" y="767" text-anchor="middle">9</text>
<text x="304.9" y="767" text-anchor="middle">10</text>
<text x="329.9" y="767" text-anchor="middle">11</text>
<text x="354.9" y="767" text-anchor="middle">12</text>
<text x="379.9" y="767" text-anchor="middle">13</text>
<text x="404.9" y="767" text-anchor="middle">14</text>
<text x="429.9" y="767" text-anchor="middle">15</text>
<text x="454.9" y="767" text-anchor="middle">16</text>
<text x="479.9" y="767" text-anchor="middle">17</text>
<text x="504.9" y="767" text-anchor="middle">18</text>
<text x="529.9" y="767" text-anchor="middle">19</text>
<text x="554.9" y="767" text-anchor="middle">20</text>
<text x="579.9" y="767" text-anchor="middle">21</text>
<text x="604.9" y="767" text-anchor="middle">22</text>
<text x="629.9" y="767" text-anchor="middle">23</text>
<text x="654.9" y="767" text-anchor="middle">24</text>
<text x="679.9" y="767" text-anchor="middle">25</text>
<text x="682" y="757" font-size="12">Hz</text>
</g>
<text x="366.5" y="667" fill="#fff" font-size="12" text-anchor="middle">V6</text>
<use href="#tR" x="695" y="651"/>
<text x="734.5" y="662" fill="#fff" font-size="12" text-anchor="middle">4.187</text>
<use href="#tG" x="695" y="671"/>
<text x="734.5" y="682" fill="#fff" font-size="12" text-anchor="middle">1.131</text>
<use href="#tY" x="695" y="691"/>
<text x="734.5" y="702" fill="#fff" font-size="12" text-anchor="middle">0.913</text>
<use href="#tM" x="695" y="711"/>
<text x="734.5" y="722" fill="#fff" font-size="12" text-anchor="middle">1.349</text>
<use href="#tB" x="695" y="731"/>
<text x="734.5" y="742" fill="#fff" font-size="12" text-anchor="middle">0.428</text>
<use href="#tR" x="73" y="73"/>
<use href="#tG" x="97" y="73"/>
<use href="#tY" x="121" y="73"/>
<use href="#tM" x="146" y="73"/>
<use href="#tB" x="170" y="73"/>
</svg>
<div class="abs" style="left:1028px;top:42px;width:242px;height:235px;background:#040404"></div>
<div class="abs" style="left:1082.5px;top:100.5px;width:134px;height:134px;border-radius:50%;background:conic-gradient(from 0deg at 50% 50%,#a80000 0deg,#b03000 25deg,#b86008 45deg,#bc8c08 58deg,#b4a400 62deg,#98a800 90deg,#80a000 112deg,#689800 122deg,#207410 135deg,#087008 150deg,#348818 165deg,#60a018 179deg,#90b000 181deg,#a0a800 200deg,#a8a000 210deg,#b08000 225deg,#b86800 240deg,#b85000 255deg,#b84000 270deg,#b83000 285deg,#b01800 300deg,#a80800 315deg,#a80000 330deg,#a80000 360deg)"></div>
<div class="abs" style="left:1082.5px;top:100.5px;width:134px;height:134px;clip-path:polygon(9.0px 33.5px,125.0px 33.5px,67.0px 134.0px);background:conic-gradient(from 0deg at 50% 50%,#e04444 0deg,#e45c44 20deg,#e88048 40deg,#f0a848 57deg,#f0d848 61deg,#d8d840 75deg,#c0d838 90deg,#b0cc38 118deg,#88b838 122deg,#489030 135deg,#308828 150deg,#58a838 165deg,#68b838 179deg,#c0e048 181deg,#c8e048 205deg,#e0d848 211deg,#e89848 240deg,#e87848 270deg,#e85c4c 300deg,#e85050 315deg,#e04444 340deg,#e04444 360deg)"></div>
<svg id="axis" width="242" height="235" viewBox="1028 42 242 235" style="position:absolute;left:1028px;top:42px">
<path d="M1091.5 134.0L1149.5 234.5L1207.5 134.0" fill="none" stroke="#ffffa0" stroke-opacity="0.5" stroke-width="1"/>
<g stroke="#fff" stroke-width="1" fill="none">
<path d="M1149.5 167.5L1207.5 134.0" stroke-opacity=".9"/>
<path d="M1149.5 167.5L1227.4 212.5" stroke-opacity=".9"/>
<path d="M1149.5 167.5L1095.5 261.0" stroke-opacity=".9"/>
<path d="M1030 167.5H1267M1149.5 62V276"/>
</g>
<circle cx="1149.5" cy="167.5" r="67" fill="none" stroke="#fff" stroke-width="1.6"/>
<path d="M1095.5 231.8A84 84 0 0 1 1149.5 83.5M1152.4 83.6A84 84 0 0 1 1202.4 102.2M1223.7 128.1A84 84 0 0 1 1223.7 206.9M1219.9 213.2A84 84 0 0 1 1205.7 229.9M1183.7 244.2A84 84 0 0 1 1152.4 251.4M1124.9 247.8A84 84 0 0 0 1149.5 251.5M1108.0 74.3A102 102 0 0 1 1145.9 65.6M1068.0 106.1A102 102 0 0 0 1047.6 163.9M1047.6 171.1A102 102 0 0 0 1063.0 221.6M1088.1 249.0A102 102 0 0 0 1145.9 269.4M1251.4 171.1A102 102 0 0 1 1209.5 250.0M1181.0 264.5A102 102 0 0 1 1153.1 269.4" fill="none" stroke="#fff" stroke-width="2.3"/>
<path d="M1151.0 83.5L1161.3 80.0L1157.1 84.0L1160.6 88.6ZM1223.0 208.2L1223.4 197.3L1225.6 202.6L1231.2 201.1ZM1221.5 210.8L1219.4 221.4L1218.0 215.9L1212.3 216.6ZM1151.0 251.5L1160.6 246.4L1157.1 251.0L1161.3 255.0ZM1147.7 65.5L1138.0 70.5L1141.5 65.9L1137.5 61.9ZM1047.5 166.6L1044.4 159.0L1047.7 162.0L1051.2 159.3ZM1047.5 168.4L1051.2 175.7L1047.7 173.0L1044.4 176.0ZM1147.7 269.5L1137.5 273.1L1141.5 269.1L1138.0 264.5ZM1251.5 169.3L1255.1 179.5L1251.1 175.5L1246.5 179.0ZM1151.3 269.5L1161.0 264.5L1157.5 269.1L1161.5 273.1Z" fill="#fff"/>
<path d="M1149.5 167.5L1188.5 235.6" stroke="#0000c8" stroke-width="2.2"/>
<path d="M1169.5 166.5A20 20 0 0 1 1160.4 184.3" fill="none" stroke="#0a0a90" stroke-width="1"/>
<text x="1166" y="187" fill="#0818b8" font-family="'Liberation Sans',sans-serif" font-size="11">59.67°</text>
<g fill="#fff" font-family="'Liberation Serif',serif">
<text x="1084" y="56" fill="#14e2e2" font-family="'Liberation Sans',sans-serif" font-size="13.2" textLength="127">Cardiac Electric Axis</text>
<g font-weight="bold" font-size="14">
<text x="1136" y="79">-90<tspan font-size="9" dy="-5" font-weight="normal">○</tspan></text>
<rect x="1051" y="160" width="30" height="13.500" fill="#040404"/><path d="M1051.500 163.500H1058.500" stroke="#ccc" stroke-width="1.200"/>
<text x="1051" y="172" font-size="14.500">+180<tspan font-size="9" dy="-6" dx="-1" font-weight="normal">○</tspan></text>
<rect x="1237.500" y="160" width="12.500" height="13.500" fill="#040404"/>
<text x="1239" y="172" font-size="14.500">0<tspan font-size="9" dy="-6" font-weight="normal">○</tspan></text>
<text transform="translate(1218.8 207.5) rotate(-60)" x="-14" y="0">+30<tspan font-size="9" dy="-5" font-weight="normal">○</tspan></text>
<text transform="translate(1105.0 244.6) rotate(30)" x="-17" y="0">+120<tspan font-size="9" dy="-5" font-weight="normal">○</tspan></text>
</g>
<g font-weight="bold" font-style="italic" font-size="13">
<text x="1030" y="85" textLength="89">Heavy Right Axis</text><text x="1030" y="100" textLength="49">Deviation</text>
<text x="1206" y="107" textLength="46">Left Axis</text><text x="1206" y="122" textLength="49">Deviation</text>
<text x="1033" y="236" textLength="53">Right Axis</text><text x="1033" y="251" textLength="49">Deviation</text>
<text x="1186" y="241" textLength="27">None</text>
<text x="1186" y="263" textLength="64">Normal Axis</text>
</g></g>
</svg>
<div class="abs" style="left:1028px;top:287px;width:242px;height:265px;border:1px solid #fff"></div>
<div class="abs" style="left:1028px;top:287px;width:241px;height:264px;border:1px solid #a0a0a0;box-shadow:inset 1px 1px 0 #fff"></div>
<div class="abs" style="left:1035px;top:281px;width:67px;height:14px;background:#f0f0f0"></div>
<div class="abs" style="left:1034px;top:302px;width:227px;height:99px;background:#fff;border-top:1px solid #696969;border-left:1px solid #696969;border-right:1px solid #e3e3e3;border-bottom:1px solid #e3e3e3;box-shadow:inset 1px 1px 0 #a0a0a0"></div>
<div class="abs" style="left:1244px;top:304px;width:16px;height:96px;background:#f0f0f0"></div>
<svg class="abs" style="left:1244px;top:304px" width="16" height="96"><path d="M4.500 11L8 7.500L11.500 11Z" fill="#a8a8a8"/><path d="M4.500 85L8 88.500L11.500 85Z" fill="#a8a8a8"/></svg>
<div class="abs" style="left:1135px;top:414px;width:126px;height:2px;border-top:1px solid #a0a0a0;border-bottom:1px solid #fff"></div>
<div class="abs" style="left:1034px;top:429px;width:227px;height:20px;background:#fff;border-top:1px solid #696969;border-left:1px solid #696969;border-right:1px solid #e3e3e3;border-bottom:1px solid #e3e3e3;box-shadow:inset 1px 1px 0 #a0a0a0"></div>
<div class="abs" style="left:1243px;top:431px;width:16px;height:16px;background:#f0f0f0;border-top:1px solid #fff;border-left:1px solid #fff;border-right:1px solid #696969;border-bottom:1px solid #696969;box-shadow:inset -1px -1px 0 #a0a0a0"></div>
<svg class="abs" style="left:1243px;top:431px" width="16" height="16"><path d="M4 6.500H11.500L7.750 10.500Z" fill="#000"/></svg>
<div class="btn" style="top:456px;height:28px"></div>
<div class="btn" style="top:485px;height:29px"></div>
<div class="btn" style="top:515px;height:28px"></div>
<div class="btn" style="top:558px;height:29px"></div>
<div class="btn" style="top:588px;height:28px"></div>
<div class="btn" style="top:617px;height:28px"></div>
<div id="status" class="abs">
<div class="abs" style="left:1232px;top:2px;width:48px;height:17px;border-top:1px solid #a0a0a0;border-left:1px solid #a0a0a0"></div></div>
<svg id="ui" class="abs" style="left:0;top:0" width="1280" height="800" viewBox="0 0 1280 800" font-family="'Liberation Sans',sans-serif">
<defs><linearGradient id="ti" x1="0" y1="0" x2="1" y2="0"><stop offset="0" stop-color="#1468b8"/><stop offset="0.55" stop-color="#30b4f4"/><stop offset="1" stop-color="#58c8ff"/></linearGradient><linearGradient id="ti2" x1="0" y1="0" x2="1" y2="0.9"><stop offset="0" stop-color="#fff" stop-opacity="0"/><stop offset="0.42" stop-color="#fff" stop-opacity="0"/><stop offset="0.62" stop-color="#fff" stop-opacity=".8"/><stop offset="0.75" stop-color="#fff"/><stop offset="1" stop-color="#fff"/></linearGradient><filter id="glow" x="-5%" y="-60%" width="110%" height="220%"><feGaussianBlur in="SourceAlpha" stdDeviation="2" result="b"/><feFlood flood-color="#d8e6ff" flood-opacity=".7"/><feComposite in2="b" operator="in" result="g"/><feMerge><feMergeNode in="g"/><feMergeNode in="SourceGraphic"/></feMerge></filter></defs>
<g filter="url(#glow)"><text x="20.8" y="13.7" textLength="278.6" lengthAdjust="spacingAndGlyphs" font-size="12.3" fill="#fff" stroke="#fff" stroke-width=".3">Contec8000 ECG Workstation - [0000001 Jacky FCG]</text></g>
<text x="7.7" y="33.7" textLength="64" lengthAdjust="spacingAndGlyphs" font-size="12.3" fill="#0c0c28" stroke="#0c0c28" stroke-width=".2">Express Task</text>
<text x="86.5" y="33.7" textLength="42.2" lengthAdjust="spacingAndGlyphs" font-size="12.3" fill="#0c0c28" stroke="#0c0c28" stroke-width=".2">Analysis</text>
<text x="143.8" y="33.7" textLength="23.5" lengthAdjust="spacingAndGlyphs" font-size="12.3" fill="#0c0c28" stroke="#0c0c28" stroke-width=".2">Help</text>
<g transform="translate(12 47)"><path d="M0 0H9.500L12 2.500V15H0Z" fill="url(#ti)"/><path d="M0 0H9.500L12 2.500V15H0Z" fill="url(#ti2)"/><path d="M9.500 0H10.500L12 1.500V2.500H9.500Z" fill="#0c1c3c"/><path d="M11.500 3V14.500H1" fill="none" stroke="#5a6c84" stroke-width="1"/><path d="M1 1.500H2.500M3.500 1.500H6" stroke="#e8f6ff" stroke-width="1"/><path d="M1 3.500H5M6 3.500H11M1 5.500H4M5.500 5.500H6.500M7.500 5.500H11M1 7.500H3M4 7.500H5M6 7.500H11M1 9.500H3M4 9.500H6.500M7.500 9.500H11M1 11.500H3.500M4.500 11.500H5.500M6.500 11.500H9M10 11.500H11" stroke="#1c5c9c" stroke-opacity=".85" stroke-width="1"/></g>
<g transform="translate(162 47)"><path d="M0 0H9.500L12 2.500V15H0Z" fill="url(#ti)"/><path d="M0 0H9.500L12 2.500V15H0Z" fill="url(#ti2)"/><path d="M9.500 0H10.500L12 1.500V2.500H9.500Z" fill="#0c1c3c"/><path d="M11.500 3V14.500H1" fill="none" stroke="#5a6c84" stroke-width="1"/><path d="M1 1.500H2.500M3.500 1.500H6" stroke="#e8f6ff" stroke-width="1"/><path d="M1 3.500H5M6 3.500H11M1 5.500H4M5.500 5.500H6.500M7.500 5.500H11M1 7.500H3M4 7.500H5M6 7.500H11M1 9.500H3M4 9.500H6.500M7.500 9.500H11M1 11.500H3.500M4.500 11.500H5.500M6.500 11.500H9M10 11.500H11" stroke="#1c5c9c" stroke-opacity=".85" stroke-width="1"/></g>
<g transform="translate(289 47)"><path d="M0 0H9.500L12 2.500V15H0Z" fill="url(#ti)"/><path d="M0 0H9.500L12 2.500V15H0Z" fill="url(#ti2)"/><path d="M9.500 0H10.500L12 1.500V2.500H9.500Z" fill="#0c1c3c"/><path d="M11.500 3V14.500H1" fill="none" stroke="#5a6c84" stroke-width="1"/><path d="M1 1.500H2.500M3.500 1.500H6" stroke="#e8f6ff" stroke-width="1"/><path d="M1 3.500H5M6 3.500H11M1 5.500H4M5.500 5.500H6.500M7.500 5.500H11M1 7.500H3M4 7.500H5M6 7.500H11M1 9.500H3M4 9.500H6.500M7.500 9.500H11M1 11.500H3.500M4.500 11.500H5.500M6.500 11.500H9M10 11.500H11" stroke="#1c5c9c" stroke-opacity=".85" stroke-width="1"/></g>
<g transform="translate(405 45)"><path d="M0 0H9.500L12 2.500V15H0Z" fill="url(#ti)"/><path d="M0 0H9.500L12 2.500V15H0Z" fill="url(#ti2)"/><path d="M9.500 0H10.500L12 1.500V2.500H9.500Z" fill="#0c1c3c"/><path d="M11.500 3V14.500H1" fill="none" stroke="#5a6c84" stroke-width="1"/><path d="M1 1.500H2.500M3.500 1.500H6" stroke="#e8f6ff" stroke-width="1"/><path d="M1 3.500H5M6 3.500H11M1 5.500H4M5.500 5.500H6.500M7.500 5.500H11M1 7.500H3M4 7.500H5M6 7.500H11M1 9.500H3M4 9.500H6.500M7.500 9.500H11M1 11.500H3.500M4.500 11.500H5.500M6.500 11.500H9M10 11.500H11" stroke="#1c5c9c" stroke-opacity=".85" stroke-width="1"/></g>
<text x="32.6" y="59" textLength="115.8" lengthAdjust="spacingAndGlyphs" font-size="12.5" fill="#000">CHD Locating Diagnosis</text>
<text x="183.2" y="59" textLength="92" lengthAdjust="spacingAndGlyphs" font-size="12.5" fill="#000">Two Lead Compare</text>
<text x="309.4" y="59" textLength="81.4" lengthAdjust="spacingAndGlyphs" font-size="12.5" fill="#000">Limb Lead Power</text>
<text x="425.7" y="57" textLength="106.2" lengthAdjust="spacingAndGlyphs" font-size="12.5" fill="#000">Precordial Lead Power</text>
<text x="1037.3" y="292" textLength="62.2" lengthAdjust="spacingAndGlyphs" font-size="12.5" fill="#000">Interpretation</text>
<text x="1037.5" y="419" textLength="72.5" lengthAdjust="spacingAndGlyphs" font-size="12.5" fill="#000">Data Dictionary</text>
<text x="1120.5" y="474" textLength="55.7" lengthAdjust="spacingAndGlyphs" font-size="12.5" fill="#000">Insert String</text>
<text x="1137" y="504" textLength="23.4" lengthAdjust="spacingAndGlyphs" font-size="12.5" fill="#000">Clear</text>
<text x="1114.5" y="533" textLength="68" lengthAdjust="spacingAndGlyphs" font-size="12.5" fill="#000">Edit Dictionary</text>
<text x="1117.7" y="577" textLength="62" lengthAdjust="spacingAndGlyphs" font-size="12.5" fill="#000">Print Preview</text>
<text x="1120.4" y="606" textLength="55.9" lengthAdjust="spacingAndGlyphs" font-size="12.5" fill="#000">Print Report</text>
<text x="1135.5" y="635" textLength="26" lengthAdjust="spacingAndGlyphs" font-size="12.5" fill="#000">Close</text>
<text x="2.7" y="795.7" textLength="644" lengthAdjust="spacingAndGlyphs" font-size="12.3" fill="#000">Press left button to zoom in and press right button to zoom out.You can drag the first trangle to adjust wave crest location.</text>
<text x="1234.3" y="795.7" textLength="41" lengthAdjust="spacingAndGlyphs" font-size="12.3" fill="#08081c">11:31:26</text>
</svg>
</body></html>
